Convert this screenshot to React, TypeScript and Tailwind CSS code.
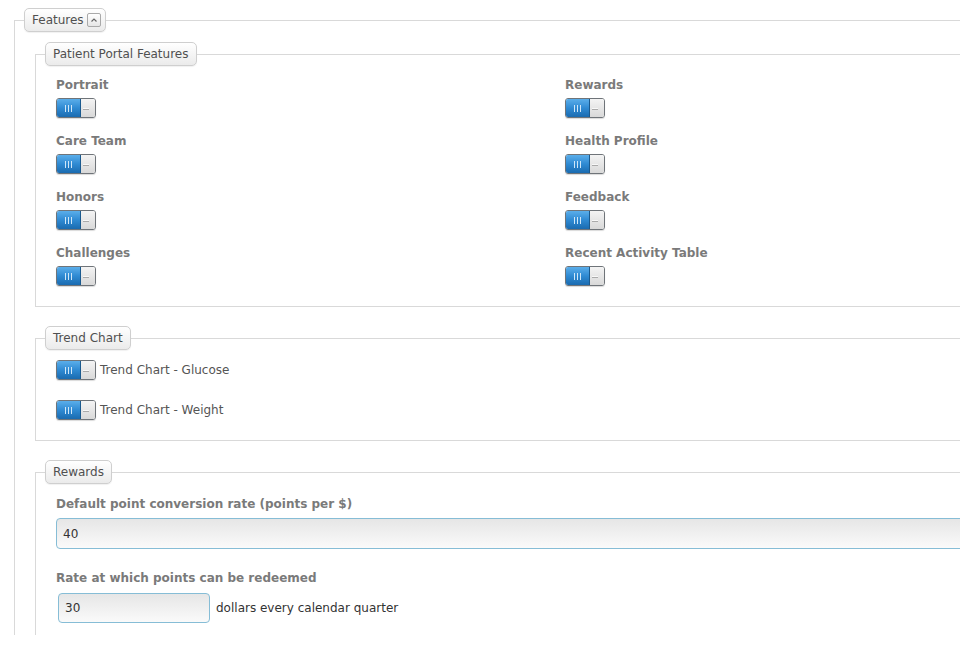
import React from "react";

function Toggle() {
  return (
    <div className="flex h-[20px] w-[40px] overflow-hidden rounded-[3px] border border-[#6f7479] shadow-[0_1px_1px_rgba(0,0,0,0.15)]">
      <div className="flex w-[24px] items-center justify-center gap-[2px] border-r border-[#1b5a8e] bg-gradient-to-b from-[#5aaeea] via-[#2f8ad3] to-[#1a6bb0]">
        <span className="h-[7px] w-px bg-[#cfe6f8]" />
        <span className="h-[7px] w-px bg-[#cfe6f8]" />
        <span className="h-[7px] w-px bg-[#cfe6f8]" />
      </div>
      <div className="flex flex-1 items-center bg-gradient-to-b from-[#f4f4f4] to-[#d9d9d9] pl-[2px]">
        <span className="h-px w-[6px] bg-[#f8f8f8] shadow-[0_1px_0_#aaa]" />
      </div>
    </div>
  );
}

function Legend({ children, tight }: { children: React.ReactNode; tight?: boolean }) {
  return (
    <legend className="p-0">
      <div
        className={
          tight
            ? "flex h-[24px] items-center rounded-[5px] border border-[#cfcfcf] bg-gradient-to-b from-white to-[#ebebeb] pl-[7px] pr-[4px] text-[#505050] shadow-[0_1px_1px_rgba(0,0,0,0.06)]"
            : "flex h-[24px] items-center rounded-[5px] border border-[#cfcfcf] bg-gradient-to-b from-white to-[#ebebeb] px-[7px] text-[#505050] shadow-[0_1px_1px_rgba(0,0,0,0.06)]"
        }
      >
        {children}
      </div>
    </legend>
  );
}

function Item({ label }: { label: string }) {
  return (
    <div className="flex flex-col">
      <div className="text-[12px] font-bold leading-[16px] text-[#7a7a7a]">{label}</div>
      <div className="mt-[5px]">
        <Toggle />
      </div>
    </div>
  );
}

export default function App() {
  const left = ["Portrait", "Care Team", "Honors", "Challenges"];
  const right = ["Rewards", "Health Profile", "Feedback", "Recent Activity Table"];
  const items: string[] = [];
  left.forEach((l, i) => {
    items.push(l);
    items.push(right[i]);
  });
  return (
    <div className="h-[635px] w-[960px] overflow-hidden bg-white font-['DejaVu_Sans',Verdana,sans-serif] text-[12px] text-[#505050]">
      <fieldset className="ml-[14px] mt-[8px] w-[1000px] border border-[#d9d9d9] pb-[40px] pl-[9px] pr-0">
        <Legend tight>
          <span className="leading-[16px]">Features</span>
          <span className="ml-[3px] flex h-[14px] w-[14px] items-center justify-center rounded-[2px] border border-[#a9a9a9] bg-gradient-to-b from-white to-[#e6e6e6]">
            <svg width="8" height="6" viewBox="0 0 8 6">
              <path d="M1.5 4.5 L4 2 L6.5 4.5" fill="none" stroke="#666" strokeWidth="1.2" />
            </svg>
          </span>
        </Legend>

        <fieldset className="ml-[11px] mt-[10px] border border-[#d9d9d9] pb-[20px] pl-[9px]">
          <Legend>Patient Portal Features</Legend>
          <div className="grid grid-cols-[509px_1fr] gap-y-[15px] pl-[11px] pt-[11px]">
            {items.map((l) => (
              <Item key={l} label={l} />
            ))}
          </div>
        </fieldset>

        <fieldset className="ml-[11px] mt-[19px] border border-[#d9d9d9] pb-[20px] pl-[9px]">
          <Legend>Trend Chart</Legend>
          <div className="flex flex-col gap-[20px] pl-[11px] pt-[10px]">
            <div className="flex items-center gap-[4px]">
              <Toggle />
              <span className="leading-[16px] text-[#555]">Trend Chart - Glucose</span>
            </div>
            <div className="flex items-center gap-[4px]">
              <Toggle />
              <span className="leading-[16px] text-[#555]">Trend Chart - Weight</span>
            </div>
          </div>
        </fieldset>

        <fieldset className="ml-[11px] mt-[19px] border border-[#d9d9d9] pb-[40px] pl-[9px]">
          <Legend>Rewards</Legend>
          <div className="flex flex-col pl-[11px] pt-[12px]">
            <div className="text-[12px] font-bold leading-[16px] text-[#7a7a7a]">
              Default point conversion rate (points per $)
            </div>
            <div className="mt-[6px] flex h-[31px] w-[940px] items-center rounded-[4px] border border-[#86bdd6] bg-gradient-to-b from-[#e6e6e6] to-[#fafafa] px-[6px] text-[#333]">
              40
            </div>
            <div className="mt-[21px] text-[12px] font-bold leading-[16px] text-[#7a7a7a]">
              Rate at which points can be redeemed
            </div>
            <div className="ml-[2px] mt-[7px] flex items-center gap-[6px]">
              <div className="flex h-[30px] w-[152px] items-center rounded-[4px] border border-[#86bdd6] bg-gradient-to-b from-[#e6e6e6] to-[#fafafa] px-[6px] text-[#333]">
                30
              </div>
              <span className="text-[#333]">dollars every calendar quarter</span>
            </div>
          </div>
        </fieldset>
      </fieldset>
    </div>
  );
}
